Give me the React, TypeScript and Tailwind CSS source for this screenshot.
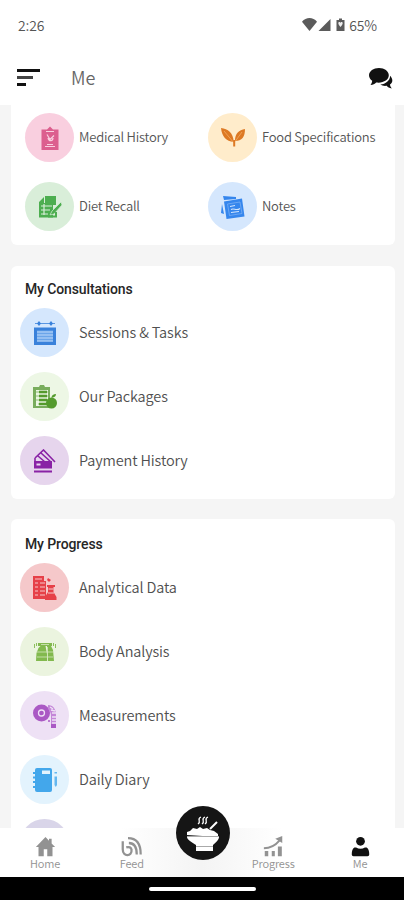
import type { ReactNode } from "react";

type ItemProps = { label: string; bg: string; children?: ReactNode };

function Bubble({ bg, children }: { bg: string; children?: ReactNode }) {
  return (
    <div className={`flex size-[49px] shrink-0 items-center justify-center rounded-full ${bg}`}>
      <svg viewBox="0 0 24 24" className="size-6" fill="currentColor">
        {children}
      </svg>
    </div>
  );
}

function SmallItem({ label, bg, children }: ItemProps) {
  return (
    <div className="flex h-[49px] items-center gap-[5px]">
      <Bubble bg={bg}>{children}</Bubble>
      <span className="whitespace-nowrap pb-px text-[13px] tracking-[-0.22px] text-[#555]">{label}</span>
    </div>
  );
}

function Row({ label, bg, children }: ItemProps) {
  return (
    <div className="flex h-[49px] items-center gap-2.5">
      <Bubble bg={bg}>{children}</Bubble>
      <span className="whitespace-nowrap pb-px text-[14.500px] tracking-[-0.13px] text-[#505050]">{label}</span>
    </div>
  );
}

function NavItem({ label, children }: { label: string; children: ReactNode }) {
  return (
    <div className="flex w-[86px] flex-col items-center pt-2 text-[#929292]">
      <svg viewBox="0 0 24 24" className="size-[21px]" fill="currentColor">
        {children}
      </svg>
      <span className="text-[11px] leading-[13px] tracking-[-0.15px]">{label}</span>
    </div>
  );
}

export default function App() {
  return (
    <div className="flex h-[900px] w-full flex-col overflow-hidden bg-[#f5f5f5] font-['Noto_Sans_CJK_SC',sans-serif] font-[350]">
      <div className="flex h-[50px] shrink-0 items-center justify-between bg-white pl-[18px] pr-[27px] text-[14px] text-[#555]">
        <span className="tracking-[-0.1px]">2:26</span>
        <div className="flex items-center">
          <svg viewBox="0 0 44 16" className="mr-[3px] h-4 w-11" fill="#5b5b5b">
            <path d="M0 4.800C4-.2 11-.2 15 4.800L7.500 14Z" />
            <path d="M16.500 14 28.500 2v12Z" />
            <path d="M37 1.500h3V3h2.500v11h-8V3H37Z" />
            <path d="M36.300 6c0-1.500 2.200-1.500 2.200 0 0-1.500 2.200-1.500 2.200 0 0 1.500-1 2.500-2.200 4-1.200-1.500-2.200-2.500-2.200-4Z" fill="#eee" />
          </svg>
          <span className="tracking-[-0.1px]">65%</span>
        </div>
      </div>

      <header className="flex h-[55px] shrink-0 items-center justify-between bg-white pl-[17px] pr-[11px]">
        <div className="flex items-center">
          <div className="flex w-[54px] flex-col gap-1">
            <div className="h-[3px] w-[23px] bg-[#111]" />
            <div className="h-[3px] w-4 bg-[#444]" />
            <div className="h-[3px] w-[9px] bg-[#111]" />
          </div>
          <h1 className="text-[18px] font-[350] text-[#666]">Me</h1>
        </div>
        <svg viewBox="0 0 24 22" className="h-[22px] w-6" fill="#111">
          <path d="M10 1C4.500 1 0 4.200 0 8.300c0 2.200 1.200 4.200 3.200 5.500C3 15.500 2.500 16.700 1.500 18c2.600-.1 4.300-1 5.700-2.500 7 .9 12.600-2.600 12.600-7.200C19.800 4.200 15.500 1 10 1Z" />
          <path d="M21.200 8.700c3 3.300 2.700 6.800-.2 8.900.1 1.500.7 2.500 1.700 3.800-2.300-.2-4.100-1.300-5-2.600-2.600.3-4.700-.1-6.400-1.300 5.500-.6 9.600-3.800 9.900-8.800Z" />
        </svg>
      </header>

      <main className="flex h-[723px] shrink-0 flex-col overflow-hidden pl-[11px] pr-[9px]">
        <section className="grid h-[140px] shrink-0 grid-cols-[183px_1fr] grid-rows-[49px_49px] gap-y-5 rounded-b-md bg-white pl-3.5 pt-2">
          <SmallItem label="Medical History" bg="bg-[#f9cfdf] text-[#dc5f8e]">
            <path d="M3.500 3.500H9L12 .500l3 3h5.500V24h-17Z" />
            <path d="M8 5.500h8M9 8.500l3 5 4-4M10 12c1 4 5 3 5 0" fill="none" stroke="#f9cfdf" strokeWidth="1.200" />
            <path d="M7 20.500h10M9 18.500h6" fill="none" stroke="#f9cfdf" strokeWidth="1.200" />
          </SmallItem>
          <SmallItem label="Food Specifications" bg="bg-[#ffeccb] text-[#dd7924]">
            <path d="M0 2c7 1 12 4 12.800 14C5 15 1 11 0 2ZM24 3c0 8-3 12-10 12 0-8 4-11 10-12Z" />
            <path d="m3 5 10 12 8-11" fill="none" stroke="#ffc989" strokeWidth=".5" />
            <path d="M13.200 14v6.500" fill="none" stroke="currentColor" strokeWidth="2" />
          </SmallItem>
          <SmallItem label="Diet Recall" bg="bg-[#d9eed9] text-[#4dae50]">
            <path d="M7 1h11v9h-3v12.500H1V7l5-5v6h1Z" />
            <path d="M3 11h11M3 15h9M3 19h7M6 9v11" fill="none" stroke="#d9eed9" strokeWidth="1.200" />
            <path d="m23 7-9 9-2 4 4-1 8-9Z" stroke="#d9eed9" strokeWidth=".7" />
            <path d="M10 21.500h8V17" fill="none" stroke="currentColor" strokeWidth="2" />
          </SmallItem>
          <SmallItem label="Notes" bg="bg-[#d5e7fd] text-[#3586ed]">
            <path d="m2 1 13 1v2L3 5Z" />
            <path d="m1 9 2 10-3-1ZM3 6.500l18-3 2.500 18-18 2.500Z" />
            <path d="m6.500 9 12.500-2 2 11.500-12.500 2Z" fill="none" stroke="#8dbbf5" strokeWidth=".6" />
            <path d="m9 11.500 5-1m-4 4c3-2 5 2 9-1m-9 4 8-1" fill="none" stroke="#d5e7fd" strokeWidth="1.100" />
          </SmallItem>
        </section>

        <section className="mt-[21px] h-[233px] shrink-0 rounded-md bg-white pl-[9px] pt-[15px]">
          <h2 className="pl-[5px] font-[Roboto,sans-serif] text-[14px] font-medium leading-[17px] tracking-[-0.12px] text-[#262626]">My Consultations</h2>
          <div className="mt-[10px] flex flex-col gap-[15px]">
            <Row label="Sessions & Tasks" bg="bg-[#d5e7fd] text-[#3981db]">
              <path d="M1 6.500h22V24H1Z" />
              <path d="M2 2.500h20" stroke="currentColor" strokeWidth=".8" />
              <path d="m6 0 2 2.500L6 5 4 2.500ZM18 0l2 2.500L18 5l-2-2.500Z" />
              <path d="M4 9.500h16v11H4Z" fill="#6ba5e9" />
              <path d="M4 11h16M4 14h16M4 17h16M4 20h16" stroke="#c0dafb" />
            </Row>
            <Row label="Our Packages" bg="bg-[#edf7e5] text-[#549b2d]">
              <path d="M0 2h6l1-2h4l1 2h5v21H0Z" fill="#79ad5d" />
              <path d="M3 5h12v16H3Z" fill="#edf7e5" />
              <path d="M6 6h8v2H6Zm0 4h8v2H6Zm0 4h8v2H6Zm0 4h8v2H6ZM3 7h2M3 11h2M3 15h2" stroke="currentColor" strokeWidth=".6" />
              <circle cx="18.500" cy="18" r="5.500" />
              <path d="M18.500 13c0-3 2-4 4.500-4 0 2-1 3-4.500 4Z" />
            </Row>
            <Row label="Payment History" bg="bg-[#e6d5ed] text-[#8922a5]">
              <path d="m2 9 8.500-8L22 13M5 7l7 6M8 4l10 9M2 9v4" fill="none" stroke="currentColor" strokeWidth="1.600" />
              <path d="M1 12h18v7.500H1Zm0 9.500h18v2H1Z" />
              <path d="M3.500 14.500h4v2h-4Z" fill="#e6d5ed" />
            </Row>
          </div>
        </section>

        <section className="mt-5 h-[350px] shrink-0 rounded-t-md bg-white pl-[9px] pt-4">
          <h2 className="pl-[5px] font-[Roboto,sans-serif] text-[14px] font-medium leading-[18px] tracking-[-0.12px] text-[#262626]">My Progress</h2>
          <div className="mt-[10px] flex flex-col gap-[15px]">
            <Row label="Analytical Data" bg="bg-[#f5c8ca] text-[#e64048]">
              <path d="M0 0h11v5h2v18H0Z" />
              <path d="M2 3h7M2 7h3m2 0h5M2 11h3m2 0h5M2 15h3m2 0h5M2 19h3m2 0h5" stroke="#f5c8ca" strokeWidth="1.100" />
              <path d="M14 9h8v2h-1.500v5l3 5v3H12v-3l3-5v-5h-1Z" />
              <path d="M15 17h6M15.500 13h5" stroke="#f5c8ca" />
              <path d="m15 2 3 2-2 2-2-2Z" />
            </Row>
            <Row label="Body Analysis" bg="bg-[#ebf4df] text-[#82b94e]">
              <path d="M5 3h14v3H5ZM5.500 8l2-2h5l1.500 8v7H3l.5-8ZM14 6h4l2 4 1 11h-6Z" />
              <path d="M1.500 4v4m2-5v3M20.500 3v3m2-2v4" stroke="currentColor" strokeWidth=".9" />
              <path d="M3 12h17M4 17h16M8 4.500h8M14.500 7v14" stroke="#d5e7bf" strokeWidth=".8" />
            </Row>
            <Row label="Measurements" bg="bg-[#eee1f5] text-[#aa59c4]">
              <circle cx="8.500" cy="9" r="8.500" />
              <circle cx="8.500" cy="9" r="3" fill="none" stroke="#eee1f5" strokeWidth="1.300" />
              <path d="M15 1c5 0 8 4 8 10v13h-5V12c0-3-1-5-3-7Z" fill="#c487d8" />
              <path d="m17 3 3 2m-2 1 4 1m-3 2h4m-4 4h4m-4 3h4m-4 3h4" stroke="#eee1f5" strokeWidth="1.500" />
              <path d="M18 20h5v4h-5Z" />
              <circle cx="16" cy="17" r="1" />
            </Row>
            <Row label="Daily Diary" bg="bg-[#e3f3fd] text-[#43a7eb]">
              <path d="M4 0h13q2 0 2 2v20q0 2-2 2H4q-2 0-2-2V2q0-2 2-2Z" />
              <path d="M0 5h3M0 9.500h3M0 14h3M0 19h3" stroke="currentColor" strokeWidth="1.800" />
              <path d="M9 2.500h8v3.500H9Z" fill="#e3f3fd" />
              <path d="M21.500 4H24v1.500h-2.500Zm0 4.500H24V17l-1.200 2-1.300-2Z" opacity=".8" />
            </Row>
            <Row label="" bg="bg-[#d9d5e9]" />
          </div>
        </section>
      </main>

      <nav className="relative flex h-[49px] shrink-0 justify-between bg-linear-to-r from-white from-30% via-[#f4f4f4] via-50% to-white to-70% pl-[2px] pr-[1px]">
        <NavItem label="Home">
          <path d="M12 1 1 12.500h3V23h6v-8h4v8h6V12.500h3L19 8.500V3h-3v2.300Z" />
        </NavItem>
        <NavItem label="Feed">
          <path
            d="M2 6v9c0 10 11 8 10 1 0-3-3-4-6-3M9 8c6 0 9 4 9 13M8 2.500c9 0 14.500 6 14.500 18.500"
            fill="none"
            stroke="currentColor"
            strokeWidth="2.600"
          />
        </NavItem>
        <div className="w-[54px]" />
        <NavItem label="Progress">
          <path d="M2 17h4v6H2Zm8 0h3.500v6H10Zm7-5h4.500v11H17Z" />
          <path d="M1 14c7 0 13-3 18-9" fill="none" stroke="currentColor" strokeWidth="2.200" />
          <path d="m14 3 8-3v8Z" />
        </NavItem>
        <NavItem label="Me">
          <g fill="#111">
            <circle cx="12" cy="6" r="5" />
            <path d="M5 13h2c3 2 7 2 10 0h2c2 1 3 4 3 8q0 2-2 2H4q-2 0-2-2c0-4 1-7 3-8Z" />
          </g>
        </NavItem>
        <div className="absolute -top-[22px] left-[176px] flex size-[54px] items-center justify-center rounded-full bg-[#151515]">
          <svg viewBox="0 0 54 54" className="size-full" fill="#fff">
            <path d="M11 29v-3l3-1 3-3 4 1 3-2 3 2 4-1 3 2 4 1 4 3v3Z" />
            <path d="M11 31h32c0 3-3 5-6 8v6H20v-6c-4-3-9-5-9-8Z" />
            <path d="M11 30.500h32M20 40.500h17" stroke="#aaa" strokeWidth="1.200" />
            <path d="m34 23 7-7" stroke="#fff" strokeWidth="2" />
            <path d="M25 11c-5 2 1 4-3 7m7-7c-5 2 1 4-3 7m6-7c-5 2 1 4-3 7" fill="none" stroke="#fff" strokeWidth="1.300" />
          </svg>
        </div>
      </nav>

      <div className="flex h-[23px] shrink-0 items-center justify-center bg-black">
        <div className="h-1 w-[107px] rounded-full bg-white" />
      </div>
    </div>
  );
}
